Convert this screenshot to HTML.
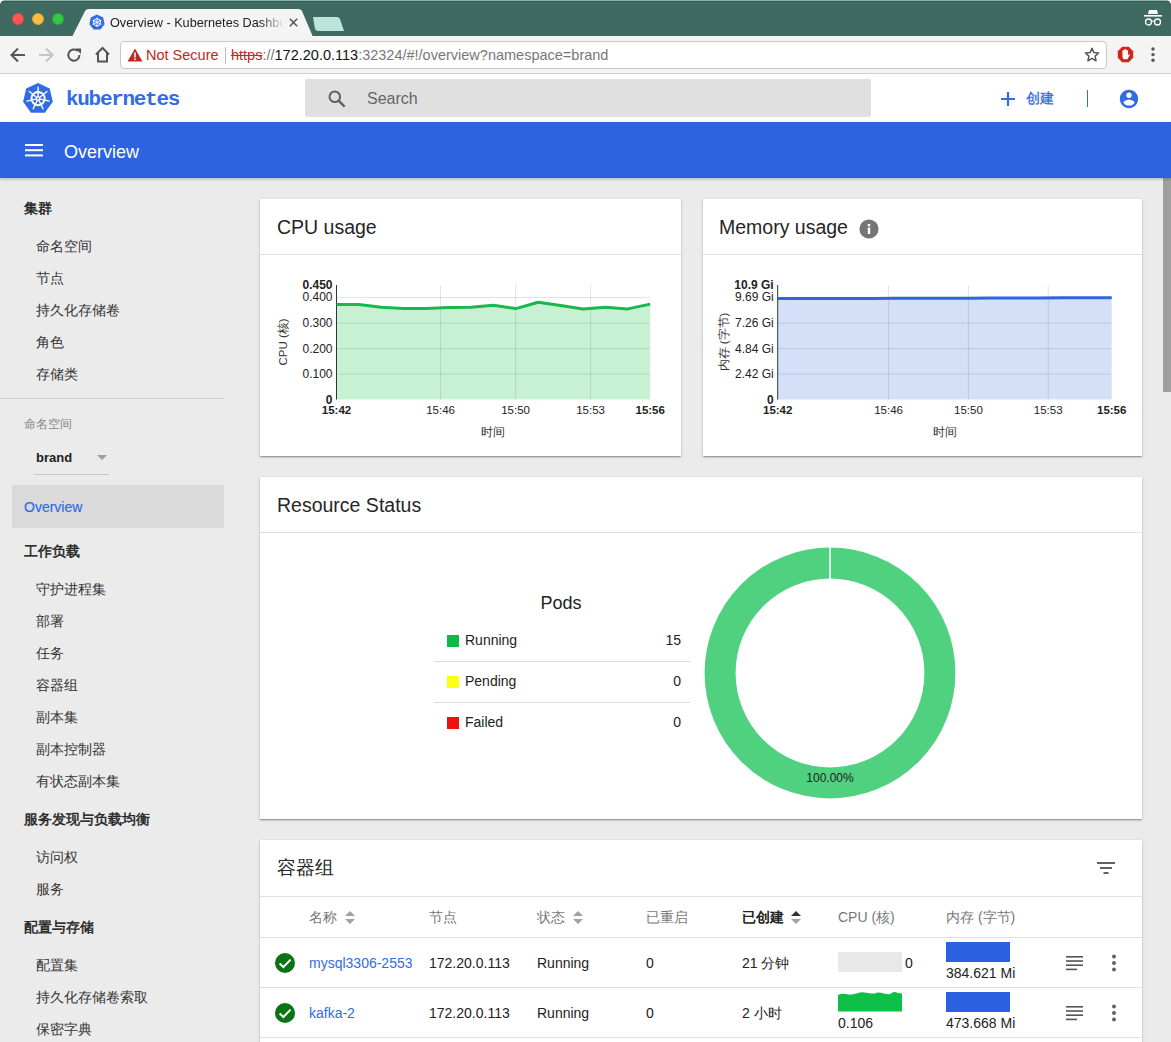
<!DOCTYPE html>
<html><head><meta charset="utf-8">
<style>
*{box-sizing:border-box;margin:0;padding:0}
html,body{width:1171px;height:1042px;overflow:hidden;background:#ebebeb;font-family:"Liberation Sans",sans-serif;color:#212121}
.abs{position:absolute}
#tabbar{position:absolute;left:0;top:0;width:1171px;height:37px;background:#3e6a61}
#addr{position:absolute;left:0;top:36px;width:1171px;height:38px;background:#f4f4f4;border-bottom:1px solid #d0d0d0}
#apptb{position:absolute;left:0;top:74px;width:1171px;height:48px;background:#fff}
#bluebar{position:absolute;z-index:5;left:0;top:122px;width:1171px;height:56px;background:#2d62e0;box-shadow:0 1px 3px rgba(0,0,0,.25)}
#side{position:absolute;left:0;top:178px;width:236px;height:864px;background:#ebebeb}
.card{position:absolute;background:#fff;box-shadow:0 1px 3px rgba(0,0,0,.2),0 1px 1px rgba(0,0,0,.14),0 2px 1px -1px rgba(0,0,0,.12)}
.card .hd{position:absolute;left:0;top:0;right:0;height:56px;border-bottom:1px solid #e0e0e0}
.card .title{position:absolute;left:17px;top:17px;font-size:19.5px;color:#262626}
</style></head><body>
<div id="tabbar">
<div class="abs" style="left:0;top:0;width:1171px;height:1px;background:#8fb3aa"></div><div class="abs" style="left:0;top:1px;width:1171px;height:1px;background:#335c55"></div><svg class="abs" style="left:0;top:0" width="5" height="5"><path d="M0 0H4Q1 1 0 4Z" fill="#fff"/></svg><svg class="abs" style="left:1166px;top:0" width="5" height="5"><path d="M5 0H1Q4 1 5 4Z" fill="#fff"/></svg>
<div class="abs" style="left:12px;top:13px;width:12px;height:12px;border-radius:50%;background:#fc5753;border:1px solid #df4744"></div>
<div class="abs" style="left:32px;top:13px;width:12px;height:12px;border-radius:50%;background:#fdbc40;border:1px solid #de9f34"></div>
<div class="abs" style="left:52px;top:13px;width:12px;height:12px;border-radius:50%;background:#33c748;border:1px solid #27aa35"></div>
<svg class="abs" style="left:0;top:0" width="360" height="37"><path d="M72 37 L85 11 Q86 9 89 9 L298 9 Q301 9 302 11 L313 37 Z" fill="#f4f4f4"/><path d="M313 17 L337 17 Q339 17 340 19 L344 31 L318 31 Q316 31 315 29 Z" fill="#bce4da"/></svg>
<svg class="abs" style="left:89px;top:14px" width="16" height="16" viewBox="0 0 16 16"><path d="M8 .5 L14.2 3.5 L15.6 10.2 L11.4 15.5 L4.6 15.5 L.4 10.2 L1.8 3.5 Z" fill="#326ce5"/><circle cx="8" cy="8.3" r="3.6" fill="none" stroke="#fff" stroke-width="1"/><path d="M8 3.5V13M3.6 6.2L12.4 10.4M12.4 6.2L3.6 10.4" stroke="#fff" stroke-width=".9"/></svg>
<div class="abs" style="left:110px;top:16px;font-size:12.7px;color:#222;white-space:nowrap;width:174px;overflow:hidden;-webkit-mask-image:linear-gradient(90deg,#000 150px,transparent 174px)">Overview - Kubernetes Dashboard</div>
<svg class="abs" style="left:289px;top:18px" width="9" height="9"><path d="M.8 .8L8.2 8.2M8.2 .8L.8 8.2" stroke="#555" stroke-width="1.5"/></svg>
<svg class="abs" style="left:1143px;top:9px" width="20" height="18" viewBox="0 0 20 18"><path d="M6 1 L14 1 L15 5 L5 5 Z" fill="#fff"/><rect x="1" y="6" width="18" height="1.6" fill="#fff"/><circle cx="5.5" cy="13" r="3" fill="none" stroke="#fff" stroke-width="1.3"/><circle cx="14.5" cy="13" r="3" fill="none" stroke="#fff" stroke-width="1.3"/><path d="M8.5 12.5 Q10 11.5 11.5 12.5" stroke="#fff" stroke-width="1.2" fill="none"/></svg>
</div>
<div id="addr">
<svg class="abs" style="left:10px;top:11px" width="16" height="16" viewBox="0 0 16 16"><path d="M15 8H2M8 1.5L1.5 8L8 14.5" stroke="#555" stroke-width="2" fill="none"/></svg>
<svg class="abs" style="left:38px;top:11px" width="16" height="16" viewBox="0 0 16 16"><path d="M1 8H14M8 1.5L14.5 8L8 14.5" stroke="#c4c4c4" stroke-width="2" fill="none"/></svg>
<svg class="abs" style="left:66px;top:11px" width="16" height="16" viewBox="0 0 16 16"><path d="M13.5 8A5.6 5.6 0 1 1 11.8 4" stroke="#555" stroke-width="2" fill="none"/><path d="M9.5 1.5L15 1.5L15 7Z" fill="#555"/></svg>
<svg class="abs" style="left:94px;top:10px" width="17" height="17" viewBox="0 0 17 17"><path d="M2 8.5L8.5 2L15 8.5M4 7V15.5H13V7" stroke="#555" stroke-width="2" fill="none" stroke-linejoin="miter"/></svg>
<div class="abs" style="left:120px;top:5px;width:987px;height:28px;background:#fff;border:1px solid #c8c8c8;border-radius:4px"></div>
<svg class="abs" style="left:127px;top:12px" width="16" height="14" viewBox="0 0 16 14"><path d="M8 .5L15.5 13.5H.5Z" fill="#bd2a22"/><rect x="7.2" y="4.5" width="1.6" height="5" fill="#fff"/><rect x="7.2" y="10.5" width="1.6" height="1.6" fill="#fff"/></svg>
<div class="abs" style="left:146px;top:10.5px;font-size:14.5px;color:#bd2a22;white-space:nowrap">Not Secure</div>
<div class="abs" style="left:225px;top:11px;width:1px;height:17px;background:#bbb"></div>
<div class="abs" style="left:231px;top:10.5px;font-size:14.5px;white-space:nowrap"><span style="color:#bd2a22;text-decoration:line-through">https</span><span style="color:#777">://</span><span style="color:#111">172.20.0.113</span><span style="color:#777">:32324/#!/overview?namespace=brand</span></div>
<svg class="abs" style="left:1084px;top:11px" width="16" height="16" viewBox="0 0 16 16"><path d="M8 1.3L9.9 5.6L14.6 6L11.1 9.1L12.1 13.8L8 11.4L3.9 13.8L4.9 9.1L1.4 6L6.1 5.6Z" fill="none" stroke="#555" stroke-width="1.5" stroke-linejoin="round"/></svg>
<svg class="abs" style="left:1117px;top:10px" width="17" height="17" viewBox="0 0 17 17"><path d="M5.2 .8H11.8L16.2 5.2V11.8L11.8 16.2H5.2L.8 11.8V5.2Z" fill="#d0241c"/><path d="M5.5 9V4.5Q6.5 3.5 7.3 4.5V3.4Q8.3 2.5 9.2 3.4V4.3Q10.2 3.6 11 4.5V9.5L12 8Q12.8 8 12.6 9L10.5 13.2H6.5Q5.5 12 5.5 10.5Z" fill="#fff"/></svg>
<svg class="abs" style="left:1149px;top:10px" width="8" height="18" viewBox="0 0 8 18"><circle cx="4" cy="3" r="1.7" fill="#555"/><circle cx="4" cy="8.6" r="1.7" fill="#555"/><circle cx="4" cy="14.2" r="1.7" fill="#555"/></svg>
</div>
<div id="apptb">
<svg class="abs" style="left:23px;top:9px" width="30" height="30" viewBox="0 0 30 30"><path d="M15 0 L26.7 5.6 L29.8 18.7 L21.9 29.7 L8 29.7 L.1 18.7 L3.2 5.6 Z" fill="#326ce5"/><circle cx="15.1" cy="15.6" r="6.6" fill="none" stroke="#fff" stroke-width="1.9"/><path d="M15.10 13.40L15.10 4.30M16.82 14.23L23.93 8.55M17.24 16.09L26.12 18.11M16.05 17.58L20.00 25.78M14.15 17.58L10.20 25.78M12.96 16.09L4.08 18.11M13.38 14.23L6.27 8.55" stroke="#fff" stroke-width="1.4" stroke-linecap="round"/><circle cx="15.1" cy="15.6" r="2.3" fill="#fff"/><circle cx="15.1" cy="15.6" r="1" fill="#326ce5"/></svg>
<div class="abs" style="left:66px;top:14px;font-family:'Liberation Mono',monospace;font-size:21px;font-weight:bold;color:#326ce5;letter-spacing:-1.3px">kubernetes</div>
<div class="abs" style="left:305px;top:5px;width:566px;height:38px;background:#e0e0e0;border-radius:2px"></div>
<svg class="abs" style="left:328px;top:16px" width="18" height="18" viewBox="0 0 18 18"><circle cx="6.8" cy="6.8" r="5.3" fill="none" stroke="#616161" stroke-width="2"/><path d="M10.6 10.6L16.6 16.6" stroke="#616161" stroke-width="2.4"/></svg>
<div class="abs" style="left:367px;top:16px;font-size:16px;color:#666">Search</div>
<svg class="abs" style="left:1000px;top:17px" width="16" height="16" viewBox="0 0 16 16"><path d="M8 1V15M1 8H15" stroke="#326ce5" stroke-width="2.2"/></svg>
<div class="abs" style="left:1026px;top:16px;font-size:14px;color:#326ce5;-webkit-text-stroke:0.35px #326ce5">创建</div>
<div class="abs" style="left:1087px;top:16px;width:1px;height:17px;background:#326ce5"></div>
<svg class="abs" style="left:1118px;top:14px" width="22" height="22" viewBox="0 0 24 24"><path fill="#326ce5" d="M12 2C6.48 2 2 6.48 2 12s4.48 10 10 10 10-4.48 10-10S17.52 2 12 2zm0 3c1.66 0 3 1.34 3 3s-1.34 3-3 3-3-1.34-3-3 1.34-3 3-3zm0 14.2c-2.5 0-4.71-1.28-6-3.22.03-1.99 4-3.08 6-3.08 1.99 0 5.97 1.09 6 3.08-1.29 1.94-3.5 3.22-6 3.22z"/></svg>
</div>
<div id="bluebar">
<svg class="abs" style="left:25px;top:22px" width="18" height="13" viewBox="0 0 18 13"><rect x="0" y="0" width="18" height="2" fill="#fff"/><rect x="0" y="5.2" width="18" height="2" fill="#fff"/><rect x="0" y="10.4" width="18" height="2" fill="#fff"/></svg>
<div class="abs" style="left:64px;top:20px;font-size:18px;color:#fff">Overview</div>
</div>
<div id="side">
<div class="abs" style="left:24px;top:20px;height:20px;line-height:20px;font-size:14px;color:#222;font-weight:normal;-webkit-text-stroke:0.45px #222;white-space:nowrap">集群</div>
<div class="abs" style="left:36px;top:58px;height:20px;line-height:20px;font-size:14px;color:#333;font-weight:normal;white-space:nowrap">命名空间</div>
<div class="abs" style="left:36px;top:90px;height:20px;line-height:20px;font-size:14px;color:#333;font-weight:normal;white-space:nowrap">节点</div>
<div class="abs" style="left:36px;top:122px;height:20px;line-height:20px;font-size:14px;color:#333;font-weight:normal;white-space:nowrap">持久化存储卷</div>
<div class="abs" style="left:36px;top:154px;height:20px;line-height:20px;font-size:14px;color:#333;font-weight:normal;white-space:nowrap">角色</div>
<div class="abs" style="left:36px;top:186px;height:20px;line-height:20px;font-size:14px;color:#333;font-weight:normal;white-space:nowrap">存储类</div>
<div class="abs" style="left:0;top:220px;width:224px;height:1px;background:#cfcfcf"></div>
<div class="abs" style="left:24px;top:236px;height:20px;line-height:20px;font-size:12px;color:#888;font-weight:normal;white-space:nowrap">命名空间</div>
<div class="abs" style="left:36px;top:270px;height:20px;line-height:20px;font-size:13px;color:#222;font-weight:bold;white-space:nowrap">brand</div>
<svg class="abs" style="left:97px;top:277px" width="11" height="6"><path d="M0 0H10L5 5Z" fill="#9e9e9e"/></svg>
<div class="abs" style="left:34px;top:296px;width:75px;height:1px;background:#c6c6c6"></div>
<div class="abs" style="left:12px;top:307px;width:212px;height:43px;background:#dadada"></div>
<div class="abs" style="left:24px;top:319px;height:20px;line-height:20px;font-size:14px;color:#326ce5;font-weight:normal;-webkit-text-stroke:0.2px #326ce5;white-space:nowrap">Overview</div>
<div class="abs" style="left:24px;top:363px;height:20px;line-height:20px;font-size:14px;color:#222;font-weight:normal;-webkit-text-stroke:0.45px #222;white-space:nowrap">工作负载</div>
<div class="abs" style="left:36px;top:401px;height:20px;line-height:20px;font-size:14px;color:#333;font-weight:normal;white-space:nowrap">守护进程集</div>
<div class="abs" style="left:36px;top:433px;height:20px;line-height:20px;font-size:14px;color:#333;font-weight:normal;white-space:nowrap">部署</div>
<div class="abs" style="left:36px;top:465px;height:20px;line-height:20px;font-size:14px;color:#333;font-weight:normal;white-space:nowrap">任务</div>
<div class="abs" style="left:36px;top:497px;height:20px;line-height:20px;font-size:14px;color:#333;font-weight:normal;white-space:nowrap">容器组</div>
<div class="abs" style="left:36px;top:529px;height:20px;line-height:20px;font-size:14px;color:#333;font-weight:normal;white-space:nowrap">副本集</div>
<div class="abs" style="left:36px;top:561px;height:20px;line-height:20px;font-size:14px;color:#333;font-weight:normal;white-space:nowrap">副本控制器</div>
<div class="abs" style="left:36px;top:593px;height:20px;line-height:20px;font-size:14px;color:#333;font-weight:normal;white-space:nowrap">有状态副本集</div>
<div class="abs" style="left:24px;top:631px;height:20px;line-height:20px;font-size:14px;color:#222;font-weight:normal;-webkit-text-stroke:0.45px #222;white-space:nowrap">服务发现与负载均衡</div>
<div class="abs" style="left:36px;top:669px;height:20px;line-height:20px;font-size:14px;color:#333;font-weight:normal;white-space:nowrap">访问权</div>
<div class="abs" style="left:36px;top:701px;height:20px;line-height:20px;font-size:14px;color:#333;font-weight:normal;white-space:nowrap">服务</div>
<div class="abs" style="left:24px;top:739px;height:20px;line-height:20px;font-size:14px;color:#222;font-weight:normal;-webkit-text-stroke:0.45px #222;white-space:nowrap">配置与存储</div>
<div class="abs" style="left:36px;top:777px;height:20px;line-height:20px;font-size:14px;color:#333;font-weight:normal;white-space:nowrap">配置集</div>
<div class="abs" style="left:36px;top:809px;height:20px;line-height:20px;font-size:14px;color:#333;font-weight:normal;white-space:nowrap">持久化存储卷索取</div>
<div class="abs" style="left:36px;top:841px;height:20px;line-height:20px;font-size:14px;color:#333;font-weight:normal;white-space:nowrap">保密字典</div>
</div>
<div class="card" style="left:260px;top:199px;width:421px;height:257px"><div class="hd"></div><div class="title">CPU usage</div></div>
<div class="card" style="left:703px;top:199px;width:439px;height:257px"><div class="hd"></div><div class="title" style="left:16px">Memory usage</div></div>
<div class="card" style="left:260px;top:477px;width:882px;height:342px"><div class="hd"></div><div class="title">Resource Status</div></div>
<div class="card" style="left:260px;top:840px;width:882px;height:220px"><div class="hd" style="height:57px"></div><div class="title" style="top:15px;font-size:19px">容器组</div></div>
<svg class="abs" style="left:0;top:0;font-family:'Liberation Sans',sans-serif" width="1171" height="1042">
<polygon points="336.5,399.5 336.5,304.5 358.9,304.5 381.3,307.2 403.7,308.6 426.1,308.6 448.5,307.6 470.9,307.2 493.4,305.3 515.8,308.6 538.2,302.3 560.6,305.5 583.0,309.1 605.4,307.3 627.8,308.9 650.2,304.1 650.2,399.5" fill="#c8f1d4"/>
<line x1="336.5" y1="297.4" x2="650.2" y2="297.4" stroke="rgba(0,0,0,.11)" stroke-width="1"/>
<line x1="336.5" y1="323.2" x2="650.2" y2="323.2" stroke="rgba(0,0,0,.11)" stroke-width="1"/>
<line x1="336.5" y1="348.6" x2="650.2" y2="348.6" stroke="rgba(0,0,0,.11)" stroke-width="1"/>
<line x1="336.5" y1="374.1" x2="650.2" y2="374.1" stroke="rgba(0,0,0,.11)" stroke-width="1"/>
<line x1="440.6" y1="285" x2="440.6" y2="399.5" stroke="rgba(0,0,0,.11)" stroke-width="1"/>
<line x1="515.6" y1="285" x2="515.6" y2="399.5" stroke="rgba(0,0,0,.11)" stroke-width="1"/>
<line x1="590.6" y1="285" x2="590.6" y2="399.5" stroke="rgba(0,0,0,.11)" stroke-width="1"/>
<line x1="336.5" y1="285" x2="336.5" y2="399.5" stroke="#333" stroke-width="1"/>
<polyline points="336.5,304.5 358.9,304.5 381.3,307.2 403.7,308.6 426.1,308.6 448.5,307.6 470.9,307.2 493.4,305.3 515.8,308.6 538.2,302.3 560.6,305.5 583.0,309.1 605.4,307.3 627.8,308.9 650.2,304.1" fill="none" stroke="#19b74d" stroke-width="3" stroke-linejoin="round"/>
<text x="332.5" y="289" text-anchor="end" font-size="12" fill="#222" font-weight="bold">0.450</text>
<text x="332.5" y="301.4" text-anchor="end" font-size="12" fill="#222" font-weight="normal">0.400</text>
<text x="332.5" y="327.2" text-anchor="end" font-size="12" fill="#222" font-weight="normal">0.300</text>
<text x="332.5" y="352.6" text-anchor="end" font-size="12" fill="#222" font-weight="normal">0.200</text>
<text x="332.5" y="378.1" text-anchor="end" font-size="12" fill="#222" font-weight="normal">0.100</text>
<text x="332.5" y="403.5" text-anchor="end" font-size="12" fill="#222" font-weight="bold">0</text>
<text x="336.5" y="414" text-anchor="middle" font-size="11.5" fill="#222" font-weight="bold">15:42</text>
<text x="440.6" y="414" text-anchor="middle" font-size="11.5" fill="#222" font-weight="normal">15:46</text>
<text x="515.6" y="414" text-anchor="middle" font-size="11.5" fill="#222" font-weight="normal">15:50</text>
<text x="590.6" y="414" text-anchor="middle" font-size="11.5" fill="#222" font-weight="normal">15:53</text>
<text x="650.2" y="414" text-anchor="middle" font-size="11.5" fill="#222" font-weight="bold">15:56</text>
<text x="492.5" y="436" text-anchor="middle" font-size="12" fill="#333">时间</text>
<text transform="translate(286.5,342) rotate(-90)" text-anchor="middle" font-size="11.5" fill="#333">CPU (核)</text>
<polygon points="777.7,399.5 777.7,298.50 801.6,298.48 825.4,298.46 849.3,298.42 873.1,298.38 897.0,298.33 920.8,298.28 944.7,298.22 968.6,298.15 992.4,298.09 1016.3,298.02 1040.1,297.94 1064.0,297.87 1087.8,297.78 1111.7,297.70 1111.7,399.5" fill="#d4e0f8"/>
<line x1="777.7" y1="297.4" x2="1111.7" y2="297.4" stroke="rgba(0,0,0,.11)" stroke-width="1"/>
<line x1="777.7" y1="323.2" x2="1111.7" y2="323.2" stroke="rgba(0,0,0,.11)" stroke-width="1"/>
<line x1="777.7" y1="348.6" x2="1111.7" y2="348.6" stroke="rgba(0,0,0,.11)" stroke-width="1"/>
<line x1="777.7" y1="374.1" x2="1111.7" y2="374.1" stroke="rgba(0,0,0,.11)" stroke-width="1"/>
<line x1="888.6" y1="285" x2="888.6" y2="399.5" stroke="rgba(0,0,0,.11)" stroke-width="1"/>
<line x1="968.4" y1="285" x2="968.4" y2="399.5" stroke="rgba(0,0,0,.11)" stroke-width="1"/>
<line x1="1048.2" y1="285" x2="1048.2" y2="399.5" stroke="rgba(0,0,0,.11)" stroke-width="1"/>
<line x1="777.7" y1="285" x2="777.7" y2="399.5" stroke="#333" stroke-width="1"/>
<polyline points="777.7,298.50 801.6,298.48 825.4,298.46 849.3,298.42 873.1,298.38 897.0,298.33 920.8,298.28 944.7,298.22 968.6,298.15 992.4,298.09 1016.3,298.02 1040.1,297.94 1064.0,297.87 1087.8,297.78 1111.7,297.70" fill="none" stroke="#2f66de" stroke-width="3" stroke-linejoin="round"/>
<text x="773.7" y="289" text-anchor="end" font-size="12" fill="#222" font-weight="bold">10.9 Gi</text>
<text x="773.7" y="301.4" text-anchor="end" font-size="12" fill="#222" font-weight="normal">9.69 Gi</text>
<text x="773.7" y="327.2" text-anchor="end" font-size="12" fill="#222" font-weight="normal">7.26 Gi</text>
<text x="773.7" y="352.6" text-anchor="end" font-size="12" fill="#222" font-weight="normal">4.84 Gi</text>
<text x="773.7" y="378.1" text-anchor="end" font-size="12" fill="#222" font-weight="normal">2.42 Gi</text>
<text x="773.7" y="403.5" text-anchor="end" font-size="12" fill="#222" font-weight="bold">0</text>
<text x="777.7" y="414" text-anchor="middle" font-size="11.5" fill="#222" font-weight="bold">15:42</text>
<text x="888.6" y="414" text-anchor="middle" font-size="11.5" fill="#222" font-weight="normal">15:46</text>
<text x="968.4" y="414" text-anchor="middle" font-size="11.5" fill="#222" font-weight="normal">15:50</text>
<text x="1048.2" y="414" text-anchor="middle" font-size="11.5" fill="#222" font-weight="normal">15:53</text>
<text x="1111.7" y="414" text-anchor="middle" font-size="11.5" fill="#222" font-weight="bold">15:56</text>
<text x="944.6" y="436" text-anchor="middle" font-size="12" fill="#333">时间</text>
<text transform="translate(727.5,342) rotate(-90)" text-anchor="middle" font-size="11.5" fill="#333">内存 (字节)</text>
</svg>
<svg class="abs" style="left:859px;top:219px" width="20" height="20" viewBox="0 0 20 20"><circle cx="10" cy="10" r="9.6" fill="#757575"/><rect x="8.8" y="8.5" width="2.4" height="6.5" fill="#fff"/><rect x="8.8" y="5" width="2.4" height="2.3" fill="#fff"/></svg>
<div class="abs" style="left:521px;top:593px;width:80px;text-align:center;font-size:18px;color:#222">Pods</div>
<div class="abs" style="left:447px;top:635px;width:12px;height:12px;background:#0cba49"></div>
<div class="abs" style="left:465px;top:632px;font-size:14px;color:#222">Running</div>
<div class="abs" style="left:600px;top:632px;width:81px;text-align:right;font-size:14px;color:#222">15</div>
<div class="abs" style="left:434px;top:661px;width:256px;height:1px;background:#dcdcdc"></div>
<div class="abs" style="left:447px;top:676px;width:12px;height:12px;background:#ffff13"></div>
<div class="abs" style="left:465px;top:673px;font-size:14px;color:#222">Pending</div>
<div class="abs" style="left:600px;top:673px;width:81px;text-align:right;font-size:14px;color:#222">0</div>
<div class="abs" style="left:434px;top:702px;width:256px;height:1px;background:#dcdcdc"></div>
<div class="abs" style="left:447px;top:717px;width:12px;height:12px;background:#f10f0f"></div>
<div class="abs" style="left:465px;top:714px;font-size:14px;color:#222">Failed</div>
<div class="abs" style="left:600px;top:714px;width:81px;text-align:right;font-size:14px;color:#222">0</div>
<svg class="abs" style="left:700px;top:543px" width="260" height="260" viewBox="0 0 260 260"><circle cx="130" cy="130" r="109.9" fill="none" stroke="#4fd17f" stroke-width="31"/><rect x="129.2" y="3" width="1.6" height="33" fill="#fff"/><text x="130" y="239" text-anchor="middle" font-size="12" fill="#222" font-family="Liberation Sans, sans-serif">100.00%</text></svg>
<svg class="abs" style="left:1096px;top:860px" width="20" height="16" viewBox="0 0 20 16"><rect x="1" y="2" width="18" height="2" fill="#616161"/><rect x="4" y="7" width="12" height="2" fill="#616161"/><rect x="7.5" y="12" width="5" height="2" fill="#616161"/></svg>
<div class="abs" style="left:260px;top:937px;width:882px;height:1px;background:#e0e0e0"></div>
<div class="abs" style="left:260px;top:987px;width:882px;height:1px;background:#e0e0e0"></div>
<div class="abs" style="left:260px;top:1037px;width:882px;height:1px;background:#e0e0e0"></div>
<div class="abs" style="left:309px;top:907px;height:20px;line-height:20px;font-size:14px;color:#777;font-weight:normal;white-space:nowrap;">名称</div>
<svg class="abs" style="left:344px;top:910px" width="12" height="15" viewBox="0 0 12 15"><path d="M6 1L11 6H1Z" fill="#a0a0a0"/><path d="M6 14L11 9H1Z" fill="#a0a0a0"/></svg>
<div class="abs" style="left:429px;top:907px;height:20px;line-height:20px;font-size:14px;color:#777;font-weight:normal;white-space:nowrap;">节点</div>
<div class="abs" style="left:537px;top:907px;height:20px;line-height:20px;font-size:14px;color:#777;font-weight:normal;white-space:nowrap;">状态</div>
<svg class="abs" style="left:572px;top:910px" width="12" height="15" viewBox="0 0 12 15"><path d="M6 1L11 6H1Z" fill="#a0a0a0"/><path d="M6 14L11 9H1Z" fill="#a0a0a0"/></svg>
<div class="abs" style="left:646px;top:907px;height:20px;line-height:20px;font-size:14px;color:#777;font-weight:normal;white-space:nowrap;">已重启</div>
<div class="abs" style="left:742px;top:907px;height:20px;line-height:20px;font-size:14px;color:#222;font-weight:bold;white-space:nowrap;">已创建</div>
<svg class="abs" style="left:790px;top:910px" width="12" height="15" viewBox="0 0 12 15"><path d="M6 1L11 6H1Z" fill="#333"/><path d="M6 14L11 9H1Z" fill="#a0a0a0"/></svg>
<div class="abs" style="left:838px;top:907px;height:20px;line-height:20px;font-size:14px;color:#777;font-weight:normal;white-space:nowrap;">CPU (核)</div>
<div class="abs" style="left:946px;top:907px;height:20px;line-height:20px;font-size:14px;color:#777;font-weight:normal;white-space:nowrap;">内存 (字节)</div>
<svg class="abs" style="left:275px;top:953px" width="20" height="20" viewBox="0 0 20 20"><circle cx="10" cy="10" r="10" fill="#0a7312"/><path d="M4.6 10.4L8.4 14L15.6 6.6" stroke="#fff" stroke-width="2" fill="none"/></svg>
<div class="abs" style="left:309px;top:953px;height:20px;line-height:20px;font-size:14px;color:#326ce5;font-weight:normal;white-space:nowrap;width:103px;overflow:hidden">mysql3306-2553</div>
<div class="abs" style="left:429px;top:953px;height:20px;line-height:20px;font-size:14px;color:#222;font-weight:normal;white-space:nowrap;">172.20.0.113</div>
<div class="abs" style="left:537px;top:953px;height:20px;line-height:20px;font-size:14px;color:#222;font-weight:normal;white-space:nowrap;">Running</div>
<div class="abs" style="left:646px;top:953px;height:20px;line-height:20px;font-size:14px;color:#222;font-weight:normal;white-space:nowrap;">0</div>
<div class="abs" style="left:742px;top:953px;height:20px;line-height:20px;font-size:14px;color:#222;font-weight:normal;white-space:nowrap;">21 分钟</div>
<svg class="abs" style="left:1066px;top:955px" width="17" height="16" viewBox="0 0 17 16"><rect x="0" y="1" width="17" height="1.6" fill="#555"/><rect x="0" y="5.2" width="17" height="1.6" fill="#555"/><rect x="0" y="9.4" width="17" height="1.6" fill="#555"/><rect x="0" y="13.6" width="11" height="1.6" fill="#555"/></svg>
<svg class="abs" style="left:1111px;top:954px" width="6" height="18" viewBox="0 0 6 18"><circle cx="3" cy="2.5" r="2" fill="#616161"/><circle cx="3" cy="9" r="2" fill="#616161"/><circle cx="3" cy="15.5" r="2" fill="#616161"/></svg>
<svg class="abs" style="left:275px;top:1003px" width="20" height="20" viewBox="0 0 20 20"><circle cx="10" cy="10" r="10" fill="#0a7312"/><path d="M4.6 10.4L8.4 14L15.6 6.6" stroke="#fff" stroke-width="2" fill="none"/></svg>
<div class="abs" style="left:309px;top:1003px;height:20px;line-height:20px;font-size:14px;color:#326ce5;font-weight:normal;white-space:nowrap;width:104px;overflow:hidden">kafka-2</div>
<div class="abs" style="left:429px;top:1003px;height:20px;line-height:20px;font-size:14px;color:#222;font-weight:normal;white-space:nowrap;">172.20.0.113</div>
<div class="abs" style="left:537px;top:1003px;height:20px;line-height:20px;font-size:14px;color:#222;font-weight:normal;white-space:nowrap;">Running</div>
<div class="abs" style="left:646px;top:1003px;height:20px;line-height:20px;font-size:14px;color:#222;font-weight:normal;white-space:nowrap;">0</div>
<div class="abs" style="left:742px;top:1003px;height:20px;line-height:20px;font-size:14px;color:#222;font-weight:normal;white-space:nowrap;">2 小时</div>
<svg class="abs" style="left:1066px;top:1005px" width="17" height="16" viewBox="0 0 17 16"><rect x="0" y="1" width="17" height="1.6" fill="#555"/><rect x="0" y="5.2" width="17" height="1.6" fill="#555"/><rect x="0" y="9.4" width="17" height="1.6" fill="#555"/><rect x="0" y="13.6" width="11" height="1.6" fill="#555"/></svg>
<svg class="abs" style="left:1111px;top:1004px" width="6" height="18" viewBox="0 0 6 18"><circle cx="3" cy="2.5" r="2" fill="#616161"/><circle cx="3" cy="9" r="2" fill="#616161"/><circle cx="3" cy="15.5" r="2" fill="#616161"/></svg>
<div class="abs" style="left:838px;top:952px;width:64px;height:20px;background:#e8e8e8"></div>
<div class="abs" style="left:905px;top:953px;height:20px;line-height:20px;font-size:14px;color:#222;font-weight:normal;white-space:nowrap;">0</div>
<div class="abs" style="left:946px;top:942px;width:64px;height:20px;background:#2b60e0"></div>
<div class="abs" style="left:946px;top:963px;height:20px;line-height:20px;font-size:14px;color:#222;font-weight:normal;white-space:nowrap;">384.621 Mi</div>
<svg class="abs" style="left:838px;top:990px" width="64" height="22" viewBox="0 0 64 22"><path d="M0 5 Q4 3 8 4 T16 4 T22 2.5 T30 3 T38 3 T46 3.5 T54 3 T60 3 L64 3.5 V21.5 H0Z" fill="#0bbf47"/></svg>
<div class="abs" style="left:838px;top:1013px;height:20px;line-height:20px;font-size:14px;color:#222;font-weight:normal;white-space:nowrap;">0.106</div>
<div class="abs" style="left:946px;top:992px;width:64px;height:20px;background:#2b60e0"></div>
<div class="abs" style="left:946px;top:1013px;height:20px;line-height:20px;font-size:14px;color:#222;font-weight:normal;white-space:nowrap;">473.668 Mi</div>
<div class="abs" style="left:1163px;top:178px;width:8px;height:214px;background:#9f9f9f"></div>
</body></html>
